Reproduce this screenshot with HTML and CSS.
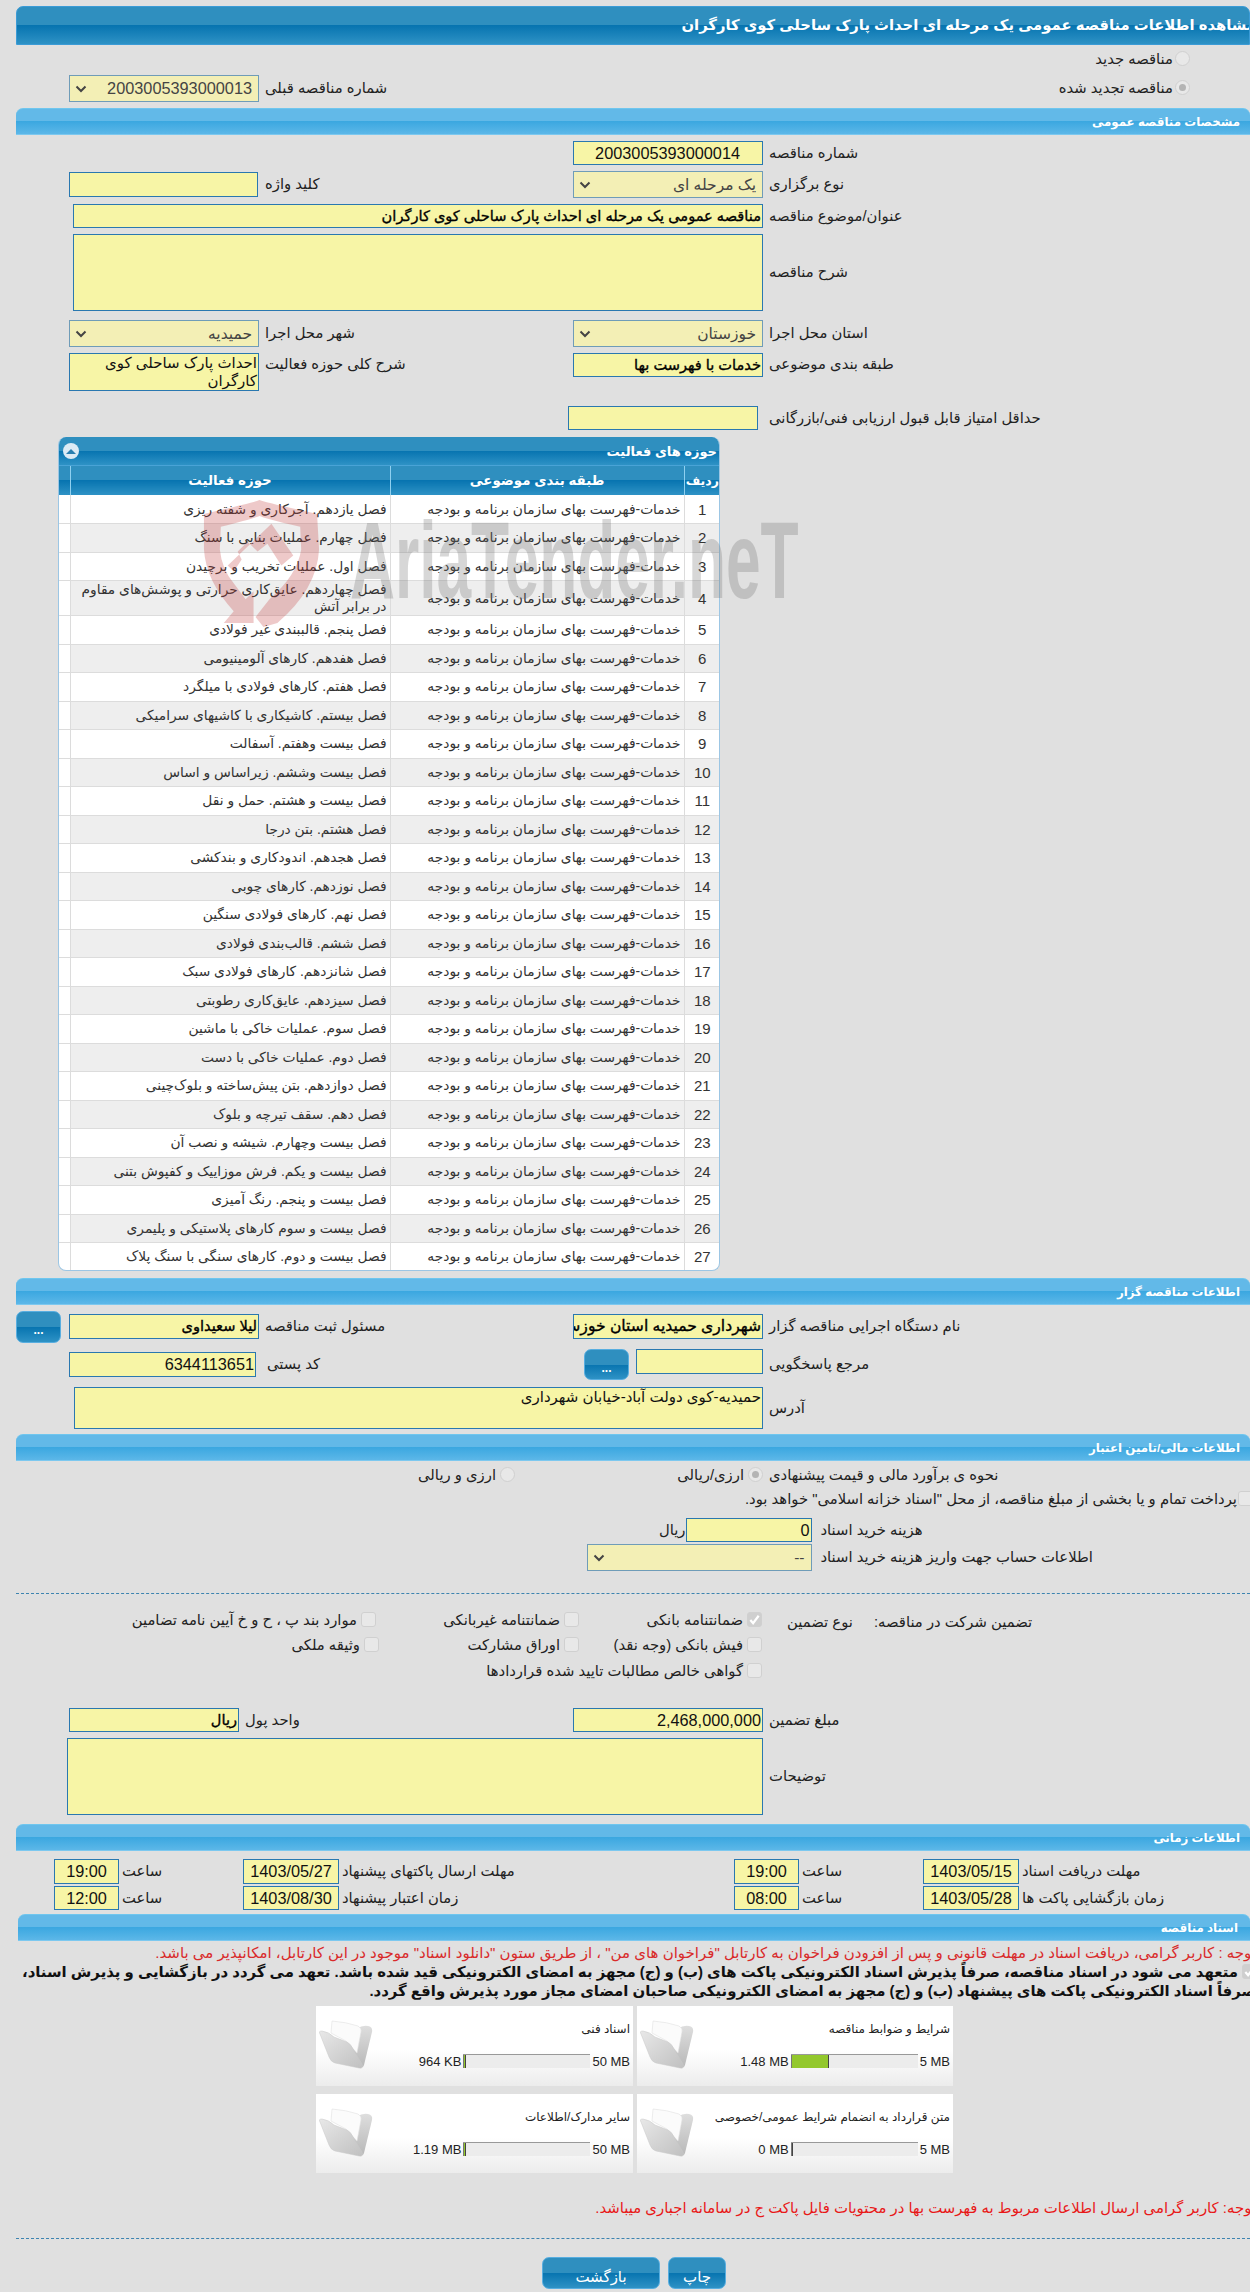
FILE: index.html
```html
<!DOCTYPE html>
<html lang="fa">
<head>
<meta charset="utf-8">
<title>مشاهده اطلاعات مناقصه</title>
<link rel="stylesheet" href="styles.css">
</head>
<body>
<svg class="defs" width="0" height="0" aria-hidden="true">
  <defs>
    <linearGradient id="fb" x1="0" y1="0" x2="0" y2="1"><stop offset="0" stop-color="#dedede"/><stop offset="1" stop-color="#b8b8b8"/></linearGradient>
    <linearGradient id="ff" x1="0" y1="0" x2="1" y2="1"><stop offset="0" stop-color="#e8e8e8"/><stop offset="1" stop-color="#c0c0c0"/></linearGradient>
    <symbol id="folder" viewBox="0 0 54 50">
      <path d="M30 22 L38 9 Q43 5 49 6 Q54 7 53 12 L45 45 Q44 48 42 47 Z" fill="url(#fb)"/>
      <path d="M13 1 Q27 2 39 6 Q43 8 42 12 L38 33 L27 21 L12 13 Z" fill="#fbfbfb" stroke="#e0e0e0" stroke-width=".6"/>
      <path d="M1 14 Q-1 11 3 11 Q10 12 15 17 L28 22 Q32 24 34 29 L43 44 Q45 49 40 48 L16 43 Q12 42 10 37 Z" fill="url(#ff)" stroke="#c8c8c8" stroke-width=".5"/>
    </symbol>
    <symbol id="chev" viewBox="0 0 12 8">
      <path d="M1.5 1.5 L6 6 L10.5 1.5" fill="none" stroke="#444" stroke-width="2"/>
    </symbol>
  </defs>
</svg>

<div class="page">
  <header class="main-head"><h1 class="main-title">مشاهده اطلاعات مناقصه عمومی یک مرحله ای احداث پارک ساحلی کوی کارگران</h1></header>

  <div class="radio-line"><span class="radio"></span><span class="label-plain">مناقصه جدید</span></div>
  <div class="row g2 mt9 h27">
    <div class="cell-c2 select dim num"><svg class="chev"><use href="#chev"/></svg><span>2003005393000013</span></div>
    <div class="label c3 lh27">شماره مناقصه قبلی</div>
    <div class="radio-end"><span class="radio on"></span><span class="label-plain">مناقصه تجدید شده</span></div>
  </div>

  <h2 class="sec mt6">مشخصات مناقصه عمومی</h2>

  <div class="row g2 mt6 h24">
    <div class="c4 field num pad22">2003005393000014</div>
    <div class="label c5">شماره مناقصه</div>
  </div>
  <div class="row g2 mt6 h27">
    <div class="cell-c2 field kw"></div>
    <div class="label c3 lh27">کلید واژه</div>
    <div class="c4 select dim"><svg class="chev"><use href="#chev"/></svg><span>یک مرحله ای</span></div>
    <div class="label c5 lh27">نوع برگزاری</div>
  </div>
  <div class="row g2 mt6 h24">
    <div class="wide field strong">مناقصه عمومی یک مرحله ای احداث پارک ساحلی کوی کارگران</div>
    <div class="label c5">عنوان/موضوع مناقصه</div>
  </div>
  <div class="row g2 mt6 h77">
    <div class="wide field"></div>
    <div class="label c5 lh77">شرح مناقصه</div>
  </div>
  <div class="row g2 mt9 h27">
    <div class="cell-c2 select dim"><svg class="chev"><use href="#chev"/></svg><span>حمیدیه</span></div>
    <div class="label c3 lh27">شهر محل اجرا</div>
    <div class="c4 select dim"><svg class="chev"><use href="#chev"/></svg><span>خوزستان</span></div>
    <div class="label c5 lh27">استان محل اجرا</div>
  </div>
  <div class="row g2 mt6 h38">
    <div class="cell-c2 field multi">احداث پارک ساحلی کوی کارگران</div>
    <div class="label c3 lh20">شرح کلی حوزه فعالیت</div>
    <div class="c4 field strong h24">خدمات با فهرست بها</div>
    <div class="label c5 lh20">طبقه بندی موضوعی</div>
  </div>
  <div class="row g2 mt15 h24">
    <div class="c4 field shift5"></div>
    <div class="label c5">حداقل امتیاز قابل قبول ارزیابی فنی/بازرگانی</div>
  </div>

  <section class="panel">
    <div class="panel-title">
      <span class="toggle"><span class="tri"></span></span>
      <span class="panel-name">حوزه های فعالیت</span>
    </div>
    <table class="grid">
      <colgroup><col class="col-n"><col class="col-cat"><col class="col-act"><col class="col-x"></colgroup>
      <thead><tr><th>ردیف</th><th>طبقه بندی موضوعی</th><th>حوزه فعالیت</th><th></th></tr></thead>
      <tbody>
        <tr><td class="n">1</td><td>خدمات-فهرست بهای سازمان برنامه و بودجه</td><td>فصل یازدهم. آجرکاری و شفته ریزی</td><td></td></tr>
        <tr><td class="n">2</td><td>خدمات-فهرست بهای سازمان برنامه و بودجه</td><td>فصل چهارم. عملیات بنایی با سنگ</td><td></td></tr>
        <tr><td class="n">3</td><td>خدمات-فهرست بهای سازمان برنامه و بودجه</td><td>فصل اول. عملیات تخریب و برچیدن</td><td></td></tr>
        <tr class="tall"><td class="n">4</td><td>خدمات-فهرست بهای سازمان برنامه و بودجه</td><td>فصل چهاردهم. عایق‌کاری حرارتی و پوشش‌های مقاوم در برابر آتش</td><td></td></tr>
        <tr><td class="n">5</td><td>خدمات-فهرست بهای سازمان برنامه و بودجه</td><td>فصل پنجم. قالببندی غیر فولادی</td><td></td></tr>
        <tr><td class="n">6</td><td>خدمات-فهرست بهای سازمان برنامه و بودجه</td><td>فصل هفدهم. کارهای آلومینیومی</td><td></td></tr>
        <tr><td class="n">7</td><td>خدمات-فهرست بهای سازمان برنامه و بودجه</td><td>فصل هفتم. کارهای فولادی با میلگرد</td><td></td></tr>
        <tr><td class="n">8</td><td>خدمات-فهرست بهای سازمان برنامه و بودجه</td><td>فصل بیستم. کاشیکاری با کاشیهای سرامیکی</td><td></td></tr>
        <tr><td class="n">9</td><td>خدمات-فهرست بهای سازمان برنامه و بودجه</td><td>فصل بیست وهفتم. آسفالت</td><td></td></tr>
        <tr><td class="n">10</td><td>خدمات-فهرست بهای سازمان برنامه و بودجه</td><td>فصل بیست وششم. زیراساس و اساس</td><td></td></tr>
        <tr><td class="n">11</td><td>خدمات-فهرست بهای سازمان برنامه و بودجه</td><td>فصل بیست و هشتم. حمل و نقل</td><td></td></tr>
        <tr><td class="n">12</td><td>خدمات-فهرست بهای سازمان برنامه و بودجه</td><td>فصل هشتم. بتن درجا</td><td></td></tr>
        <tr><td class="n">13</td><td>خدمات-فهرست بهای سازمان برنامه و بودجه</td><td>فصل هجدهم. اندودکاری و بندکشی</td><td></td></tr>
        <tr><td class="n">14</td><td>خدمات-فهرست بهای سازمان برنامه و بودجه</td><td>فصل نوزدهم. کارهای چوبی</td><td></td></tr>
        <tr><td class="n">15</td><td>خدمات-فهرست بهای سازمان برنامه و بودجه</td><td>فصل نهم. کارهای فولادی سنگین</td><td></td></tr>
        <tr><td class="n">16</td><td>خدمات-فهرست بهای سازمان برنامه و بودجه</td><td>فصل ششم. قالب‌بندی فولادی</td><td></td></tr>
        <tr><td class="n">17</td><td>خدمات-فهرست بهای سازمان برنامه و بودجه</td><td>فصل شانزدهم. کارهای فولادی سبک</td><td></td></tr>
        <tr><td class="n">18</td><td>خدمات-فهرست بهای سازمان برنامه و بودجه</td><td>فصل سیزدهم. عایق‌کاری رطوبتی</td><td></td></tr>
        <tr><td class="n">19</td><td>خدمات-فهرست بهای سازمان برنامه و بودجه</td><td>فصل سوم. عملیات خاکی با ماشین</td><td></td></tr>
        <tr><td class="n">20</td><td>خدمات-فهرست بهای سازمان برنامه و بودجه</td><td>فصل دوم. عملیات خاکی با دست</td><td></td></tr>
        <tr><td class="n">21</td><td>خدمات-فهرست بهای سازمان برنامه و بودجه</td><td>فصل دوازدهم. بتن پیش‌ساخته و بلوک‌چینی</td><td></td></tr>
        <tr><td class="n">22</td><td>خدمات-فهرست بهای سازمان برنامه و بودجه</td><td>فصل دهم. سقف تیرچه و بلوک</td><td></td></tr>
        <tr><td class="n">23</td><td>خدمات-فهرست بهای سازمان برنامه و بودجه</td><td>فصل بیست وچهارم. شیشه و نصب آن</td><td></td></tr>
        <tr><td class="n">24</td><td>خدمات-فهرست بهای سازمان برنامه و بودجه</td><td>فصل بیست و یکم. فرش موزاییک و کفپوش بتنی</td><td></td></tr>
        <tr><td class="n">25</td><td>خدمات-فهرست بهای سازمان برنامه و بودجه</td><td>فصل بیست و پنجم. رنگ آمیزی</td><td></td></tr>
        <tr><td class="n">26</td><td>خدمات-فهرست بهای سازمان برنامه و بودجه</td><td>فصل بیست و سوم کارهای پلاستیکی و پلیمری</td><td></td></tr>
        <tr><td class="n">27</td><td>خدمات-فهرست بهای سازمان برنامه و بودجه</td><td>فصل بیست و دوم. کارهای سنگی با سنگ پلاک</td><td></td></tr>
      </tbody>
    </table>
  </section>

  <h2 class="sec mt7">اطلاعات مناقصه گزار</h2>

  <div class="row g2 mt6 h32">
    <button class="btn dots c1" type="button">...</button>
    <div class="cell-c2 field strong h25 top3">لیلا سعیداوی</div>
    <div class="label c3 lh31">مسئول ثبت مناقصه</div>
    <div class="c4 field strong big h25 top3">شهرداری حمیدیه استان خوزستان</div>
    <div class="label c5 lh31">نام دستگاه اجرایی مناقصه گزار</div>
  </div>
  <div class="row g2 mt6 h31">
    <div class="cell-c2 field num h25 top3 narrow2">6344113651</div>
    <div class="label c3 lh31 post">کد پستی</div>
    <div class="c4 ref">
      <button class="btn dots" type="button">...</button>
      <div class="field h25"></div>
    </div>
    <div class="label c5 lh31">مرجع پاسخگویی</div>
  </div>
  <div class="row g2 mt7 h38">
    <div class="wide2 field plain">حمیدیه-کوی دولت آباد-خیابان شهرداری</div>
    <div class="label c5 lh42">آدرس</div>
  </div>

  <h2 class="sec mt9">اطلاعات مالی/تامین اعتبار</h2>

  <div class="row g-lab mt6 h15">
    <div class="opts">
      <div class="opt w248"><span class="radio on"></span><span class="label-plain">ارزی/ریالی</span></div>
      <div class="opt"><span class="radio"></span><span class="label-plain">ارزی و ریالی</span></div>
    </div>
    <div class="label lh20">نحوه ی برآورد مالی و قیمت پیشنهادی</div>
  </div>
  <div class="islamic mt9"><span class="check"></span><span class="label-plain">پرداخت تمام و یا بخشی از مبلغ مناقصه، از محل "اسناد خزانه اسلامی" خواهد بود.</span></div>
  <div class="row g-cost mt12 h24">
    <div class="unit">ریال</div>
    <div class="field num">0</div>
    <div class="label lbl9">هزینه خرید اسناد</div>
  </div>
  <div class="row g-acc mt2 h27">
    <div></div>
    <div class="select dim"><svg class="chev"><use href="#chev"/></svg><span>--</span></div>
    <div class="label lbl9 lh27">اطلاعات حساب جهت واریز هزینه خرید اسناد</div>
  </div>

  <hr class="dash mt22">

  <div class="row g-guar mt18 h15">
    <div class="opt"><span class="check"></span><span class="label-plain">موارد بند پ ، ح و خ آیین نامه تضامین</span></div>
    <div class="opt"><span class="check"></span><span class="label-plain">ضمانتنامه غیربانکی</span></div>
    <div class="opt"><span class="check on"><svg viewBox="0 0 14 14" class="tick"><path d="M2.5 7.5 L5.5 11 L11.5 3" fill="none" stroke="#fff" stroke-width="2.4"/></svg></span><span class="label-plain">ضمانتنامه بانکی</span></div>
    <div class="guar-lab"><span class="label-plain">نوع تضمین</span><span class="label-plain">تضمین شرکت در مناقصه:</span></div>
  </div>
  <div class="row g-guar mt10 h15">
    <div class="opt nudge3"><span class="check"></span><span class="label-plain">وثیقه ملکی</span></div>
    <div class="opt"><span class="check"></span><span class="label-plain">اوراق مشارکت</span></div>
    <div class="opt"><span class="check"></span><span class="label-plain">فیش بانکی (وجه نقد)</span></div>
  </div>
  <div class="row g-guar mt11 h15">
    <div></div>
    <div></div>
    <div class="opt"><span class="check"></span><span class="label-plain">گواهی خالص مطالبات تایید شده قراردادها</span></div>
  </div>

  <div class="row g2 mt30 h24">
    <div class="cell-c2 field strong w170">ریال</div>
    <div class="label c3 money">واحد پول</div>
    <div class="c4 field num">2,468,000,000</div>
    <div class="label c5">مبلغ تضمین</div>
  </div>
  <div class="row g2 mt6 h77">
    <div class="wide3 field"></div>
    <div class="label c5 lh77">توضیحات</div>
  </div>

  <h2 class="sec mt9">اطلاعات زمانی</h2>

  <div class="row g-time mt8 h25">
    <div class="field num c-center t1">19:00</div>
    <div class="label tl">ساعت</div>
    <div class="field num c-center">1403/05/27</div>
    <div class="label tl">مهلت ارسال پاکتهای پیشنهاد</div>
    <div class="field num c-center">19:00</div>
    <div class="label tl">ساعت</div>
    <div class="field num c-center">1403/05/15</div>
    <div class="label tl">مهلت دریافت اسناد</div>
  </div>
  <div class="row g-time mt2 h24">
    <div class="field num c-center t1">12:00</div>
    <div class="label tl">ساعت</div>
    <div class="field num c-center">1403/08/30</div>
    <div class="label tl">زمان اعتبار پیشنهاد</div>
    <div class="field num c-center">08:00</div>
    <div class="label tl">ساعت</div>
    <div class="field num c-center">1403/05/28</div>
    <div class="label tl">زمان بازگشایی پاکت ها</div>
  </div>

  <h2 class="sec sec-doc mt4">اسناد مناقصه</h2>

  <p class="note-red">توجه : کاربر گرامی، دریافت اسناد در مهلت قانونی و پس از افزودن فراخوان به کارتابل "فراخوان های من" ، از طریق ستون "دانلود اسناد" موجود در این کارتابل، امکانپذیر می باشد.</p>
  <p class="pledge"><span class="check on inline"><svg viewBox="0 0 14 14" class="tick"><path d="M2.5 7.5 L5.5 11 L11.5 3" fill="none" stroke="#fff" stroke-width="2.4"/></svg></span>متعهد می شود در اسناد مناقصه، صرفاً پذیرش اسناد الکترونیکی پاکت های (ب) و (ج) مجهز به امضای الکترونیکی قید شده باشد. تعهد می گردد در بازگشایی و پذیرش اسناد،<br>صرفاً اسناد الکترونیکی پاکت های پیشنهاد (ب) و (ج) مجهز به امضای الکترونیکی صاحبان امضای مجاز مورد پذیرش واقع گردد.</p>

  <div class="tiles">
    <article class="tile">
      <svg class="folder"><use href="#folder"/></svg>
      <div class="tile-body">
        <div class="tile-name">اسناد فنی</div>
        <div class="meter"><span class="used">964 KB</span><span class="bar"><span class="fill" style="width:2%"></span></span><span class="max">50 MB</span></div>
      </div>
    </article>
    <article class="tile">
      <svg class="folder"><use href="#folder"/></svg>
      <div class="tile-body">
        <div class="tile-name">شرایط و ضوابط مناقصه</div>
        <div class="meter"><span class="used">1.48 MB</span><span class="bar"><span class="fill" style="width:30%"></span></span><span class="max">5 MB</span></div>
      </div>
    </article>
    <article class="tile">
      <svg class="folder"><use href="#folder"/></svg>
      <div class="tile-body">
        <div class="tile-name">سایر مدارک/اطلاعات</div>
        <div class="meter"><span class="used">1.19 MB</span><span class="bar"><span class="fill" style="width:2.4%"></span></span><span class="max">50 MB</span></div>
      </div>
    </article>
    <article class="tile">
      <svg class="folder"><use href="#folder"/></svg>
      <div class="tile-body">
        <div class="tile-name">متن قرارداد به انضمام شرایط عمومی/خصوصی</div>
        <div class="meter"><span class="used">0 MB</span><span class="bar"><span class="fill" style="width:0"></span></span><span class="max">5 MB</span></div>
      </div>
    </article>
  </div>

  <p class="note-red2">توجه: کاربر گرامی ارسال اطلاعات مربوط به فهرست بها در محتویات فایل پاکت ج در سامانه اجباری میباشد.</p>

  <hr class="dash mt18">

  <div class="actions">
    <button class="btn act back" type="button">بازگشت</button>
    <button class="btn act print" type="button">چاپ</button>
  </div>

  <div class="wm-text" aria-hidden="true">AriaTender.neT</div>
  <svg class="wm-shield" viewBox="0 0 128 128" aria-hidden="true">
    <path d="M6 14 Q58 2 62 0 Q66 2 120 14 L122 50 Q120 90 80 124 L66 128 L58 118 L72 100 Q100 76 104 50 L103 27 Q66 18 62 16 Q58 18 23 27 L22 50 Q24 70 36 84 L48 100 L56 92 L56 124 L26 124 L36 112 Q8 82 6 50 Z" fill="#c43a3a"/>
    <path d="M30 66 L74 24 L96 56 L84 66 L70 44 L60 52 L50 42 L40 52 L44 60 L36 72 Z" fill="#c43a3a"/>
  </svg>
</div>
</body>
</html>
```

FILE: styles.css
```css
* { box-sizing: border-box; }
html, body { margin: 0; padding: 0; background: #fff; }
body { font-family: "Liberation Sans", "DejaVu Sans", sans-serif; font-size: 14.8px; color: #222; }
.defs { position: absolute; }

.page {
  position: relative;
  width: 1250px;
  height: 2292px;
  overflow: hidden;
  background: #e0e0e0;
  padding: 6px 0 0 16px;
}

.main-head {
  height: 39px;
  border: 1px solid #3b9bd6;
  border-radius: 7px 7px 0 0;
  background: linear-gradient(#2f8fbf 0, #2f8fbf 50%, #0774b0 50%, #2e92c5 100%);
  direction: rtl;
  overflow: hidden;
}
.main-title {
  margin: 0 -7px 0 0;
  font-size: 14.8px;
  font-weight: bold;
  line-height: 36px;
  color: #fff;
  white-space: nowrap;
}

.sec {
  margin-bottom: 0;
  height: 27px;
  border-top: 1px solid #6fc6ee;
  border-bottom: 1px solid #7cc8ef;
  border-radius: 7px 7px 0 0;
  background: linear-gradient(#62b9e8 0, #62b9e8 48%, #3aa7e0 48%, #5cb7e8 100%);
  color: #fff;
  font-size: 11.8px;
  font-weight: bold;
  line-height: 26px;
  padding-right: 10px;
  direction: rtl;
}
.sec-doc { margin-left: 2px; padding-right: 12px; }

.mt2 { margin-top: 2px; } .mt4 { margin-top: 4px; } .mt6 { margin-top: 6px; } .mt7 { margin-top: 7px; }
.mt8 { margin-top: 8px; } .mt9 { margin-top: 9px; } .mt10 { margin-top: 10px; } .mt11 { margin-top: 11px; }
.mt12 { margin-top: 12px; } .mt15 { margin-top: 15px; } .mt18 { margin-top: 18px; } .mt22 { margin-top: 22px; }
.mt30 { margin-top: 30px; }
.h15 { height: 15px; } .h24 { height: 24px; } .h25 { height: 25px; } .h27 { height: 27px; }
.h31 { height: 31px; } .h32 { height: 32px; } .h38 { height: 38px; } .h77 { height: 77px; }
.top3 { margin-top: 3px; }

.row { display: grid; align-items: start; }
.row > .field, .row > .select { height: 100%; }
.row > .field.h24 { height: 24px; }
.row > .field.h25 { height: 25px; }
.g2 { grid-template-columns: 53px 190px 314px 190px 1fr; }
.c1 { grid-column: 1; }
.cell-c2 { grid-column: 2; }
.c3 { grid-column: 3; }
.c4 { grid-column: 4; }
.c5 { grid-column: 5; }
.wide { grid-column: 1 / 5; margin-left: 57px; }
.wide2 { grid-column: 1 / 5; margin-left: 58px; }
.wide3 { grid-column: 1 / 5; margin-left: 51px; }

.label {
  direction: rtl;
  text-align: left;
  white-space: nowrap;
  padding-left: 6px;
  line-height: 24px;
  color: #222;
}
.lh20 { line-height: 22px; }
.lh27 { line-height: 27px; }
.lh31 { line-height: 31px; }
.lh42 { line-height: 42px; }
.lh77 { line-height: 77px; }
.label-plain { direction: rtl; white-space: nowrap; color: #222; }

.field {
  border: 1px solid #2a78b0;
  background: #f7f5a6;
  direction: rtl;
  padding: 0 1px;
  font-size: 15px;
  line-height: 22px;
  color: #111;
  overflow: hidden;
  white-space: nowrap;
}
.field.strong { font-weight: normal; font-size: 14.6px; color: #000; -webkit-text-stroke: .35px #000; }
.field.strong.big { font-size: 15.6px; }
.field.num { font-size: 16.3px; }
.field.pad22 { padding-right: 22px; }
.field.multi { white-space: normal; font-size: 15px; line-height: 18px; }
.field.plain { white-space: normal; font-size: 15px; line-height: 18px; }
.row > .field.multi { height: 38px; }
.kw { height: 25px !important; margin-top: 1px; width: 189px; }
.narrow2 { width: 187px; }
.shift5 { margin-left: -5px; width: 190px; }
.w170 { width: 170px; }
.money { margin-left: -20px; }
.post { padding-left: 8px; }
.c-center { text-align: center; }

.select {
  display: flex;
  align-items: center;
  justify-content: space-between;
  border: 1px solid #6f9cb8;
  background: #f3efb5;
  color: #444;
  font-size: 15.5px;
  padding: 0 6px 0 5px;
}
.select.num { font-size: 16.3px; }
.select > span { direction: rtl; white-space: nowrap; }
.chev { width: 12px; height: 8px; flex: none; }

.radio, .check {
  display: inline-block;
  flex: none;
  width: 15px;
  height: 15px;
  border: 1px solid #d0d0d0;
  background: #e8e8e8;
}
.radio { border-radius: 50%; position: relative; }
.radio.on::after {
  content: "";
  position: absolute;
  inset: 3px;
  border-radius: 50%;
  background: #b4b4b4;
}
.check { border-radius: 3px; }
.check.on { background: #cfcfcf; }
.tick { display: block; width: 13px; height: 13px; }

.radio-line {
  margin-top: 6px;
  height: 15px;
  display: flex;
  justify-content: flex-start;
  align-items: center;
  gap: 2px;
  padding-right: 60px;
  direction: rtl;
}
.radio-line, .radio-end, .opt, .islamic { line-height: 20px; }
.radio-end {
  grid-column: 4 / 6;
  direction: rtl;
  display: flex;
  align-items: center;
  gap: 2px;
  height: 15px;
  margin-top: 5px;
  padding-right: 60px;
}

.panel {
  margin: 7px 0 0 42px;
  width: 662px;
  height: 834px;
  border: 1px solid #9cc6e4;
  border-top: 0;
  border-radius: 8px;
  background: #fff;
  overflow: hidden;
}
.panel-title {
  display: flex;
  align-items: center;
  justify-content: space-between;
  height: 29px;
  padding: 0 2px 0 4px;
  background: linear-gradient(#2f8fbf 0, #2f8fbf 50%, #0774b0 50%, #2e92c5 100%);
  border-bottom: 1px solid #49a3d6;
}
.toggle {
  width: 16px;
  height: 16px;
  border-radius: 50%;
  background: #dcebf5;
  display: flex;
  align-items: center;
  justify-content: center;
}
.tri { width: 0; height: 0; border: 5px solid transparent; border-top: 0; border-bottom: 5px solid #2a7fb0; }
.panel-name { direction: rtl; color: #fff; font-size: 13px; font-weight: bold; }

.grid { width: 661px; table-layout: fixed; border-collapse: collapse; direction: rtl; }
.col-n { width: 36px; } .col-cat { width: 294px; } .col-act { width: 320px; } .col-x { width: 11px; }
.grid th {
  height: 29px;
  padding: 0;
  background: linear-gradient(#2f8fbf 0, #2f8fbf 50%, #0774b0 50%, #2e92c5 100%);
  color: #fff;
  font-size: 13.4px;
  font-weight: bold;
  border-left: 1px solid #8fd0f0;
  white-space: nowrap;
}
.grid th:first-child { font-size: 12.5px; }
.grid th:last-child { border-left: 0; }
.grid td {
  height: 28.5px;
  padding: 0 3px;
  border-left: 1px solid #dcdcdc;
  border-bottom: 1px solid #dcdcdc;
  font-size: 13.8px;
  line-height: 17px;
  color: #333;
  text-align: right;
}
.grid td:last-child { border-left: 0; }
.grid tr.tall td { height: 35px; }
.grid td.n { text-align: center; font-size: 15px; }
.grid tbody tr:nth-child(even) td { background: #eee; }
.grid tbody tr:nth-child(even) td:last-child { background: #fff; }

.btn {
  border: 1px solid #58aee0;
  border-radius: 7px;
  background: linear-gradient(#2f8fbf 0, #2f8fbf 50%, #0774b0 50%, #2e92c5 100%);
  color: #fff;
  padding: 0;
  font-family: inherit;
  cursor: pointer;
}
.dots { width: 45px; height: 32px; font-size: 12px; font-weight: bold; line-height: 36px; }
.ref { display: flex; gap: 7px; padding-left: 11px; align-items: flex-start; height: 31px; }
.ref .btn { height: 31px; width: 45px; flex: none; }
.ref .field { flex: 1; }

.g-lab { grid-template-columns: 747px 1fr; }
.g-lab .label { padding-left: 6px; margin-top: -3px; }
.opts { direction: rtl; display: flex; }
.opt { direction: rtl; display: flex; align-items: center; gap: 4px; height: 15px; }
.w248 { width: 248px; }

.islamic {
  direction: rtl;
  display: flex;
  align-items: center;
  gap: 1px;
  height: 15px;
  margin-right: -3px;
}
.g-cost { grid-template-columns: 669.5px 126px 1fr; }
.g-acc { grid-template-columns: 571px 224.5px 1fr; }
.unit { direction: rtl; text-align: right; line-height: 24px; }
.lbl9 { padding-left: 9px; }

.dash { border: 0; border-top: 1px dashed #3d84b0; height: 0; margin-bottom: 0; }
hr.mt22 { margin-top: 22px; }
hr.mt18 { margin-top: 18px; }

.g-guar { grid-template-columns: 360px 203px 183px 1fr; }
.guar-lab { display: flex; gap: 21px; padding-left: 25px; line-height: 20px; }
.nudge3 { margin-right: -3px; }

.g-time { grid-template-columns: 38px 65px 124px 96px 395px 65px 124px 96px 1fr; }
.g-time .field { grid-row: 1; }
.g-time .field.t1 { grid-column: 2; }
.g-time .label { padding-left: 3px; grid-row: 1; }
.g-time .field:nth-child(3) { grid-column: 4; }
.g-time .label:nth-child(4) { grid-column: 5; }
.g-time .field:nth-child(5) { grid-column: 6; }
.g-time .label:nth-child(6) { grid-column: 7; }
.g-time .field:nth-child(7) { grid-column: 8; }
.g-time .label:nth-child(8) { grid-column: 9; }
.g-time .label:nth-child(2) { grid-column: 3; }

p { margin: 0; }
.note-red {
  direction: rtl;
  color: #d92a2a;
  font-size: 15px;
  line-height: 24px;
  height: 24px;
  white-space: nowrap;
  margin-right: -6px;
}
.pledge {
  direction: rtl;
  font-weight: bold;
  font-size: 14.9px;
  line-height: 19px;
  color: #111;
  white-space: nowrap;
  margin: -2px -6px 0 0;
}
.check.inline { margin: 0 -1px 0 4px; vertical-align: top; margin-top: 1px; }

.tiles {
  display: grid;
  grid-template-columns: 317px 316px;
  grid-template-rows: 80px 79px;
  gap: 8px 4px;
  margin: 5px 0 0 300px;
  width: 637px;
}
.tile {
  display: flex;
  background: linear-gradient(#fff 0, #fff 55%, #ececec 100%);
  padding: 0 3px;
  gap: 0;
}
.folder { width: 54px; height: 50px; margin-top: 14px; flex: none; }
.tile-body { flex: 1; min-width: 0; padding-top: 13px; }
.tile-name { direction: rtl; font-size: 12px; line-height: 20px; height: 35px; white-space: nowrap; color: #222; }
.meter { display: flex; justify-content: flex-end; align-items: center; gap: 2px; font-size: 13px; height: 14px; color: #222; }
.bar { width: 127px; height: 14px; background: #ececec; border-top: 1px solid #999; display: block; flex: none; }
.fill { display: block; height: 13px; background: #93c82d; border-right: 1px solid #444; border-left: 1px solid #777; }

.note-red2 {
  direction: rtl;
  color: #e81818;
  font-size: 14.9px;
  line-height: 24px;
  white-space: nowrap;
  margin: 23px -6px 0 0;
}

.actions { display: flex; margin: 18px 0 0 526px; gap: 8px; }
.act { height: 32px; font-size: 15px; line-height: 38px; }
.back { width: 118px; }
.print { width: 58px; }

.wm-text {
  position: absolute;
  left: 350px;
  top: 497px;
  font-family: "Liberation Sans", sans-serif;
  font-weight: bold;
  font-size: 110px;
  line-height: 126px;
  color: rgba(110, 110, 110, .28);
  white-space: nowrap;
  transform-origin: 0 0;
  transform: scaleX(.566);
  pointer-events: none;
}
.wm-shield {
  position: absolute;
  left: 198px;
  top: 500px;
  width: 127px;
  height: 127px;
  opacity: .27;
  pointer-events: none;
}
```
